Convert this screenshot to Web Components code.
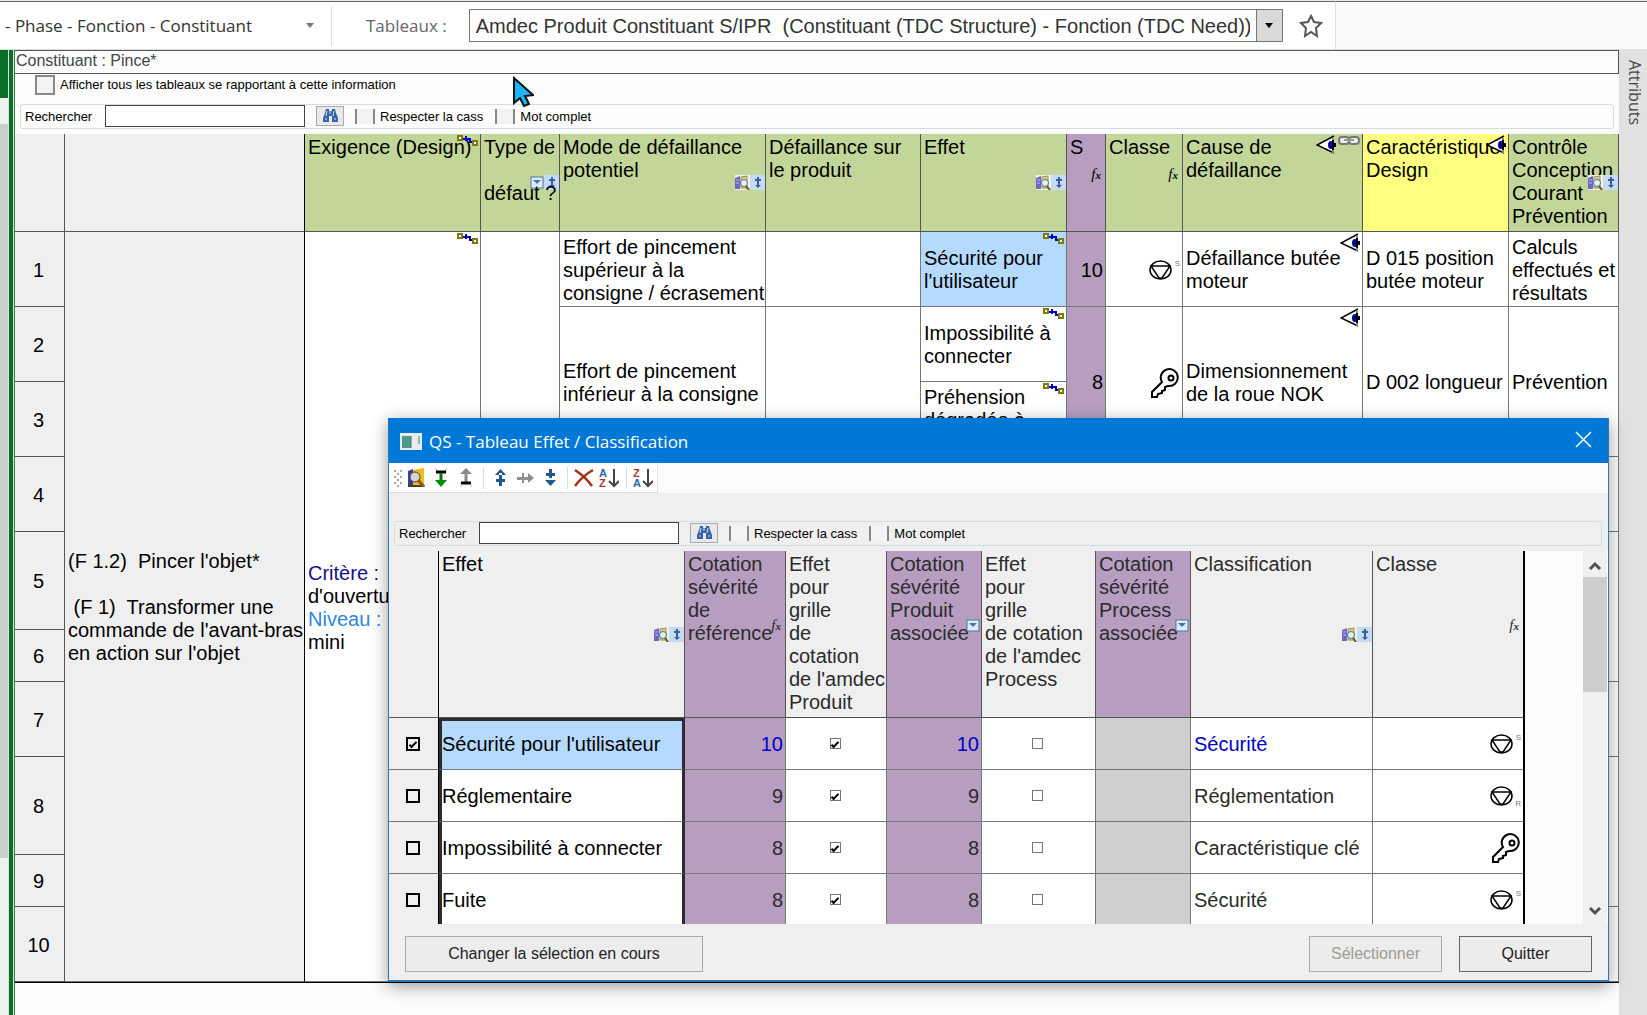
<!DOCTYPE html>
<html lang="fr">
<head>
<meta charset="utf-8">
<title>QS - Tableau Effet / Classification</title>
<style>
  body {
    margin: 0;
    min-height: 100vh;
    background: #fcfcfc;
    font-family: "Liberation Sans", Arial, sans-serif;
    color: #000;
    overflow: hidden;
  }
</style>
</head>
<body>
<qs-app></qs-app>

<script>
// Dessins des icônes : [largeur, hauteur, contenu svg]
const ICONES = {
  lien: [21, 12, `<path d="M6 4h5M9 1v5M9 4h4v3h3" fill="none" stroke="#0000c8" stroke-width="2"/><rect x="1" y="1" width="4" height="4" fill="#fff" stroke="#7d7a10" stroke-width="2"/><rect x="16" y="6" width="4" height="4" fill="#fff" stroke="#7d7a10" stroke-width="2"/>`],
  oeil: [20, 20, `<path d="M18 2 1 10l17 8z" fill="#fff"/><path d="M18 1 1 10l17 8" fill="none" stroke="#000" stroke-width="1.500"/><path d="M17 3v15" stroke="#888" stroke-width="2"/><ellipse cx="15" cy="10" rx="3" ry="4" fill="#0000a0"/><path d="M17 5v10" stroke="#000" stroke-width="2"/><path d="M20 10h-3" stroke="#000" stroke-width="4"/>`],
  maillon: [22, 11, `<rect x="1" y="2" width="10" height="7" rx="3" fill="#eee" stroke="#777" stroke-width="2"/><rect x="11" y="2" width="10" height="7" rx="3" fill="#eee" stroke="#777" stroke-width="2"/><path d="M6 5h10" stroke="#999" stroke-width="2"/>`],
  recherche: [15, 15, `<rect width="15" height="15" fill="#f4f1e4"/><path d="M0 3l5-2v13H0z" fill="#6a68c4"/><path d="M1 5h3M1 8h3" stroke="#c0c0f0"/><path d="M6 2l6-1v12H6z" fill="#d8cc98" stroke="#9a8c50"/><circle cx="9" cy="8" r="3.500" fill="#d8f4f8" stroke="#5f7280"/><path d="M11 11l3 4" stroke="#6b5418" stroke-width="2"/>`],
  inserer: [15, 15, `<rect width="15" height="15" fill="#c5daf3"/><path d="M8 2v8M5 5h6" stroke="#365f9c" stroke-width="2"/><path d="M5 10h6l-3 3z" fill="#365f9c"/>`],
  filtre: [14, 14, `<rect x="1" y="1" width="12" height="11" fill="#dcecff" stroke="#4c76a8"/><path d="M3 4h8l-4 4z" fill="#4474ac"/>`],
  jumelles: [17, 15, `<path d="M4 1h3v2h3V1h3l1 4 2 5v4h-6V8H7v6H1v-4l2-5z" fill="#3b62a8"/><path d="M4 8l1-5M11 8l1-5M3 11h2M12 11h2" stroke="#cfe0f8" stroke-width="1"/><path d="M8 3v3" stroke="#cfe0f8"/>`],
  stop: [23, 20, `<ellipse cx="11.500" cy="10" rx="10.500" ry="9" fill="none" stroke="#000" stroke-width="1.500"/><path d="M2 6h19l-8 12h-3z" fill="none" stroke="#000" stroke-width="1.500"/>`],
  cle: [30, 30, `<path d="M12 14a8.500 8.500 0 1 1 6 4l-3 1v3l-3 1v2l-4 1-1 3H2v-5z" fill="#fff" stroke="#000" stroke-width="2"/><circle cx="21" cy="10" r="2.500" fill="none" stroke="#000" stroke-width="2"/>`],
  etoile: [24, 24, `<path d="M12 2l3 6 7 1-5 5 1 8-6-4-6 4 1-8-5-5 7-1z" fill="#fff" stroke="#555" stroke-width="2"/>`],
  curseur: [22, 32, `<path d="M2 2v25l6-5 4 8 5-2-4-8 8-1z" fill="#18b8f8" stroke="#111" stroke-width="2"/>`],
  fenetre: [22, 17, `<rect width="22" height="17" fill="#e6edf0"/><rect x="2" y="3" width="9" height="12" fill="#4f9a84"/><path d="M11 3v12" stroke="#3c6e80"/><rect x="18" y="3" width="2" height="8" fill="#8cbcae"/>`],
  fermer: [17, 17, `<path d="M1 1l15 15M16 1 1 16" stroke="#fff" stroke-width="1.500"/>`],
  poignee: [9, 18, `<path d="M1 1v17M7 1v17" stroke="#aaa" stroke-width="2" stroke-dasharray="2 4"/><path d="M4 4v14" stroke="#aaa" stroke-width="2" stroke-dasharray="2 4"/>`],
  catalogue: [18, 19, `<path d="M1 3l5-2v17H1z" fill="#3c3ca8"/><path d="M6 2l5-1 6-1v16l-5 2H6z" fill="#f0bc18"/><path d="M1 18h14" stroke="#503c10" stroke-width="2"/><circle cx="8" cy="9" r="5" fill="#d4d4d4" stroke="#444"/><path d="M11 12l6 7" stroke="#8a5a10" stroke-width="3"/>`],
  descendre: [12, 19, `<path d="M1 0v3M11 0v3" stroke="#bbb"/><path d="M1 4h10" stroke="#000" stroke-width="3"/><path d="M6 5v9" stroke="#087808" stroke-width="3"/><path d="M0 12h12l-6 7z" fill="#078a07"/>`],
  monter: [12, 19, `<path d="M6 5v9" stroke="#888" stroke-width="3"/><path d="M0 6h12L6 0z" fill="#8a8a8a"/><path d="M1 15h10" stroke="#000" stroke-width="3"/><path d="M1 16v3M11 16v3" stroke="#bbb"/>`],
  avant: [11, 17, `<path d="M0 6h11L5.500 0zM4 4h3v13H4zM1 10h9v3H1z" fill="#20588c"/>`],
  droite: [17, 12, `<path d="M0 5h12v3H0zM5 1h2v10H5zM11 1l6 5-6 5z" fill="#8e8e8e"/>`],
  apres: [11, 17, `<path d="M0 11h11l-5.500 6zM4 0h3v9H4zM1 4h9v3H1z" fill="#20588c"/>`],
  supprimer: [20, 20, `<path d="M1 2c6 4 12 9 17 16M19 2C12 6 6 11 1 18" fill="none" stroke="#a83018" stroke-width="2.500"/>`],
  triAZ: [20, 20, `<text x="0" y="9" font-size="11" fill="#2a68a8" font-weight="bold">A</text><text x="0" y="19" font-size="11" fill="#b03828" font-weight="bold">Z</text><path d="M15 1v17M10 13l5 5 5-5" fill="none" stroke="#444" stroke-width="2"/>`],
  triZA: [20, 20, `<text x="0" y="9" font-size="11" fill="#b03828" font-weight="bold">Z</text><text x="0" y="19" font-size="11" fill="#2a68a8" font-weight="bold">A</text><path d="M15 1v17M10 13l5 5 5-5" fill="none" stroke="#444" stroke-width="2"/>`],
  haut: [14, 9, `<path d="M2 8l5-5 5 5" fill="none" stroke="#505050" stroke-width="3"/>`],
  bas: [14, 9, `<path d="M2 1l5 5 5-5" fill="none" stroke="#505050" stroke-width="3"/>`],
  fleche: [8, 5, `<path d="M0 0h8L4 5z" fill="currentColor"/>`],
};

class QsIcone extends HTMLElement {
  connectedCallback() {
    const [l, h, dessin] = ICONES[this.getAttribute("nom")];
    this.attachShadow({ mode: "open" }).innerHTML = `
      <style>
        :host { display: inline-flex; flex: none; }
        svg { display: block; }
      </style>
      <svg width="${l}" height="${h}" viewBox="0 0 ${l} ${h}" aria-hidden="true">${dessin}</svg>
    `;
  }
}
customElements.define("qs-icone", QsIcone);

const ico = (nom) => `<qs-icone nom="${nom}"></qs-icone>`;
const FX = `<i class="fx">f<small>x</small></i>`;

// Barre du haut : choix de la vue et du tableau
class QsBarre extends HTMLElement {
  connectedCallback() {
    this.attachShadow({ mode: "open" }).innerHTML = `
      <style>
        :host {
          display: flex;
          height: 50px;
          box-sizing: border-box;
          border-top: 1px solid #e8ede4;
          border-bottom: 1px solid #ddd;
          background: #fafafa;
        }
        .zone {
          display: flex;
          align-items: center;
          border-top: 1px solid #666;
          border-right: 1px solid #ddd;
          background: #fff;
          font-family: "Open Sans", "Noto Sans", sans-serif;
          font-size: 17px;
        }
        .reste { flex: 1; border-top: 1px solid #666; }
        select {
          appearance: none;
          border: 0;
          padding: 0;
          background: none;
          font: inherit;
          color: #333;
        }
        .vue {
          display: flex;
          align-items: center;
          width: 332px;
          height: 40px;
          box-sizing: border-box;
          padding: 0 17px 0 5px;
          border-right: 1px solid #ddd;
          color: #777;
        }
        .vue select { flex: 1; }
        label { padding: 0 22px 0 34px; color: #666; }
        .liste {
          display: flex;
          width: 814px;
          height: 33px;
          box-sizing: border-box;
          border: 1px solid #777;
          font-family: "Liberation Sans", Arial, sans-serif;
          font-size: 20px;
        }
        .liste select { flex: 1; min-width: 0; padding: 0 6px; }
        .liste span {
          display: grid;
          place-items: center;
          width: 25px;
          border-left: 1px solid #777;
          background: #d9d9d9;
        }
        button { border: 0; background: none; padding: 0; margin: 0 12px 0 16px; display: flex; }
      </style>
      <div class="zone">
        <div class="vue">
          <select aria-label="Vue"><option>- Phase - Fonction - Constituant</option></select>
          ${ico("fleche")}
        </div>
        <label for="tableaux">Tableaux :</label>
        <div class="liste">
          <select id="tableaux"><option>Amdec Produit Constituant S/IPR &nbsp;(Constituant (TDC Structure) - Fonction (TDC Need))</option></select>
          <span>${ico("fleche")}</span>
        </div>
        <button aria-label="Favori">${ico("etoile")}</button>
      </div>
      <div class="reste"></div>
    `;
  }
}
customElements.define("qs-barre", QsBarre);

// Ligne de recherche, commune à la page et à la fenêtre
class QsRecherche extends HTMLElement {
  connectedCallback() {
    this.attachShadow({ mode: "open" }).innerHTML = `
      <style>
        :host {
          display: flex;
          align-items: center;
          height: 25px;
          box-sizing: border-box;
          border: 1px solid #d5dde4;
          border-radius: 3px;
          font-size: 13px;
        }
        label { display: flex; align-items: center; gap: 5px; white-space: nowrap; }
        .nom { width: 80px; padding-left: 4px; box-sizing: border-box; }
        .option { margin-right: 12px; }
        .texte {
          width: 200px;
          height: 22px;
          box-sizing: border-box;
          border: 1px solid #444;
          background: #fff;
          margin: 0 11px 2px 4px;
        }
        button {
          display: grid;
          place-items: center;
          width: 28px;
          height: 20px;
          padding: 0;
          border: 1px solid #aaa;
          background: #e9e9ec;
          margin: 0 11px 2px 0;
        }
        .option input {
          appearance: none;
          width: 20px;
          height: 15px;
          margin: 0;
          border: solid #888;
          border-width: 0 2px;
          background: #f3f3f3;
        }
      </style>
      <label class="nom" for="q">Rechercher</label>
      <input class="texte" id="q" type="text">
      <button aria-label="Lancer la recherche">${ico("jumelles")}</button>
      <label class="option"><input type="checkbox">Respecter la cass</label>
      <label class="option"><input type="checkbox">Mot complet</label>
    `;
  }
}
customElements.define("qs-recherche", QsRecherche);

const STYLE_TABLE = `
  :host { display: block; font-size: 20px; line-height: 23px; }
  table { width: 100%; table-layout: fixed; border-collapse: separate; border-spacing: 0; }
  th, td {
    position: relative;
    box-sizing: border-box;
    padding: 2px 2px 0 3px;
    border: solid #777;
    border-width: 0 1px 1px 0;
    font-weight: normal;
    text-align: left;
    white-space: pre;
    background: #fff;
  }
  th { vertical-align: top; border-color: #555; background: #efefef; }
  td { vertical-align: middle; }
  .violet { background: #b79ec1; }
  .bleu { background: #b5daff; }
  .nombre { text-align: right; }
  /* Pictogrammes posés sur le bord droit de la cellule */
  .marge { position: absolute; inset: 0 0 0 auto; display: flex; align-items: center; }
  .formule { padding: 0 4px 16px 0; }
  .coin { position: absolute; top: 1px; right: 2px; display: flex; gap: 2px; }
  .fx { font-family: "Liberation Serif", serif; font-size: 15px; line-height: 15px; }
  .fx small { font-size: 11px; font-weight: bold; }
  .classe { display: flex; justify-content: flex-end; align-items: center; }
  .classe small { width: 8px; height: 23px; font-size: 8px; line-height: 10px; color: #777; text-align: right; }
  .classe .r { line-height: 38px; }
`;

const CHERCHER = `<span class="marge">${ico("recherche")}${ico("inserer")}</span>`;
const FORMULE = `<span class="marge formule">${FX}</span>`;
const LIEN = `<span class="coin">${ico("lien")}</span>`;
const OEIL = `<span class="coin">${ico("oeil")}</span>`;

function symbole(nom, lettre) {
  const indice = lettre ? `<small class="${lettre.toLowerCase()}">${lettre}</small>` : "";
  return `<div class="classe">${ico(nom)}${indice}</div>`;
}

// Tableau AMDEC principal
class QsAmdec extends HTMLElement {
  connectedCallback() {
    const largeurs = [50, 240, 176, 79, 206, 155, 146, 39, 77, 180, 146, 110];
    const hauteurs = [75, 75, 75, 75, 98, 52, 75, 98, 52, 75];
    // Première ligne de chaque groupe -> nombre de lignes fusionnées
    const groupes = { 1: 1, 2: 2, 4: 1, 5: 2, 7: 1, 8: 2, 10: 1 };

    const contenu = {
      1: ["Effort de pincement\nsupérieur à la\nconsigne / écrasement", "", "Sécurité pour\nl'utilisateur" + LIEN, "10",
        symbole("stop", "S"), "Défaillance butée\nmoteur" + OEIL, "D 015 position\nbutée moteur", "Calculs\neffectués et\nrésultats"],
      2: ["Effort de pincement\ninférieur à la consigne", "", "Impossibilité à\nconnecter" + LIEN, "8",
        symbole("cle"), "Dimensionnement\nde la roue NOK" + OEIL, "D 002 longueur", "Prévention"],
    };

    let lignes = "";
    hauteurs.forEach((hauteur, i) => {
      const n = i + 1;
      let cellules = `<td class="numero">${n}</td>`;
      if (n === 1) {
        cellules += `<td rowspan="10" class="fonction">(F 1.2)  Pincer l'objet*\n\n (F 1)  Transformer une\ncommande de l'avant-bras\nen action sur l'objet</td>`;
        cellules += `<td rowspan="10"><span class="critere">Critère :</span>\nd'ouverture\n<span class="niveau">Niveau :</span>\nmini${LIEN}</td>`;
        cellules += `<td rowspan="10"></td>`;
      }
      if (groupes[n]) {
        const textes = contenu[n] || Array(8).fill("");
        textes.forEach((texte, c) => {
          let classe = "";
          if (c === 2 && n === 1) classe = "bleu";
          if (c === 3) classe = "violet nombre";
          // Seul l'effet n'est pas fusionné sur les lignes 2 et 3
          const span = c === 2 && n === 2 ? 1 : groupes[n];
          cellules += `<td rowspan="${span}" class="${classe}">${texte}</td>`;
        });
      }
      if (n === 3) cellules += `<td>Préhension\ndégradée à\n ${LIEN}</td>`;
      lignes += `<tr style="height:${hauteur}px">${cellules}</tr>`;
    });

    this.attachShadow({ mode: "open" }).innerHTML = `
      <style>${STYLE_TABLE}
        table { border-bottom: 1px solid #000; }
        .entete { height: 98px; }
        .vert { background: #c3d699; }
        .jaune { background: #ffff80; }
        .numero { background: #efefef; text-align: center; border-color: #555; padding: 2px 2px 0 0; }
        .fonction, .entete th:nth-child(2) { background: #efefef; border-right-color: #000; }
        .dessus { position: relative; }
        .critere { color: #10108a; }
        .niveau { color: #2f86dc; }
      </style>
      <table>
        <colgroup>${largeurs.map((l) => `<col style="width:${l}px">`).join("")}</colgroup>
        <thead>
          <tr class="entete">
            <th></th>
            <th></th>
            <th class="vert">Exigence (Design)${LIEN}</th>
            <th class="vert"><span class="marge">${ico("filtre")}${ico("inserer")}</span><span class="dessus">Type de\n\ndéfaut ?</span></th>
            <th class="vert">Mode de défaillance\npotentiel${CHERCHER}</th>
            <th class="vert">Défaillance sur\nle produit</th>
            <th class="vert">Effet${CHERCHER}</th>
            <th class="violet">S${FORMULE}</th>
            <th class="vert">Classe${FORMULE}</th>
            <th class="vert">Cause de\ndéfaillance<span class="coin">${ico("oeil")}${ico("maillon")}</span></th>
            <th class="jaune">Caractéristique\nDesign${OEIL}</th>
            <th class="vert">Contrôle\nConception\nCourant\nPrévention${CHERCHER}</th>
          </tr>
        </thead>
        <tbody>${lignes}</tbody>
      </table>
    `;
  }
}
customElements.define("qs-amdec", QsAmdec);

// Tableau Effet / Classification de la fenêtre
class QsClassification extends HTMLElement {
  connectedCallback() {
    const largeurs = [50, 246, 101, 101, 95, 114, 95, 182, 151];
    const donnees = [
      { effet: "Sécurité pour l'utilisateur", cote: 10, classe: "Sécurité", dessin: symbole("stop", "S"), choisi: true },
      { effet: "Réglementaire", cote: 9, classe: "Réglementation", dessin: symbole("stop", "R") },
      { effet: "Impossibilité à connecter", cote: 8, classe: "Caractéristique clé", dessin: symbole("cle") },
      { effet: "Fuite", cote: 8, classe: "Sécurité", dessin: symbole("stop", "S") },
    ];
    const filtre = `<span class="marge filtre">${ico("filtre")}</span>`;

    const lignes = donnees.map((d) => `
      <tr class="${d.choisi ? "choisi" : ""}">
        <td class="case"><input type="checkbox" aria-label="Choisir ${d.effet}" ${d.choisi ? "checked" : ""}></td>
        <td class="effet">${d.effet}</td>
        <td class="violet nombre">${d.cote}</td>
        <td class="coche"><input type="checkbox" aria-label="Amdec Produit" checked></td>
        <td class="violet nombre">${d.cote}</td>
        <td class="coche"><input type="checkbox" aria-label="Amdec Process"></td>
        <td class="gris"></td>
        <td class="lien">${d.classe}</td>
        <td>${d.dessin}</td>
      </tr>`).join("");

    this.attachShadow({ mode: "open" }).innerHTML = `
      <style>${STYLE_TABLE}
        :host { color: #2b2b2b; }
        .entete { height: 167px; }
        tbody tr { height: 52px; }
        td { padding-top: 1px; }
        table { border-right: 1px solid #000; }
        th:last-child, td:last-child { border-right-color: #000; }
        th:first-child, .case { background: #efefef; border-right-color: #000; }
        th:nth-child(2), .effet { color: #000; }
        .effet { border-left: 3px solid #2b2b30; border-right: 3px solid #2b2b30; padding-left: 0; }
        .choisi .effet { background: #b5daff; border-top: 3px solid #2b2b30; padding: 0 0 2px; }
        .choisi .nombre, .choisi .lien { color: #0000c8; }
        .gris { background: #cfcfcf; }
        .filtre { padding: 0 1px 16px 0; }
        .case, .coche { text-align: center; padding: 0 2px 2px 0; }
        input {
          appearance: none;
          display: inline-grid;
          width: 14px;
          height: 14px;
          margin: 0;
          border: 2px solid #000;
          vertical-align: middle;
          overflow: visible;
        }
        .coche input { width: 11px; height: 11px; border: 1px solid #777; }
        input:checked::after {
          content: "";
          place-self: center;
          width: 8px;
          height: 4px;
          box-sizing: border-box;
          border: solid #000;
          border-width: 0 0 2px 2px;
          transform: rotate(-45deg);
        }
      </style>
      <table>
        <colgroup>${largeurs.map((l) => `<col style="width:${l}px">`).join("")}</colgroup>
        <thead>
          <tr class="entete">
            <th></th>
            <th>Effet${CHERCHER}</th>
            <th class="violet">Cotation\nsévérité\nde\nréférence${FORMULE}</th>
            <th>Effet\npour\ngrille\nde\ncotation\nde l'amdec\nProduit</th>
            <th class="violet">Cotation\nsévérité\nProduit\nassociée${filtre}</th>
            <th>Effet\npour\ngrille\nde cotation\nde l'amdec\nProcess</th>
            <th class="violet">Cotation\nsévérité\nProcess\nassociée${filtre}</th>
            <th>Classification${CHERCHER}</th>
            <th>Classe${FORMULE}</th>
          </tr>
        </thead>
        <tbody>${lignes}</tbody>
      </table>
    `;
  }
}
customElements.define("qs-classification", QsClassification);

// Fenêtre avec titre, barre d'outils, contenu et boutons
class QsFenetre extends HTMLElement {
  connectedCallback() {
    const outils = [
      ["catalogue", "Catalogue"], ["descendre", "Descendre"], ["monter", "Monter"], null,
      ["avant", "Insérer avant"], ["droite", "Insérer à droite"], ["apres", "Insérer après"], null,
      ["supprimer", "Supprimer"], ["triAZ", "Tri croissant"], null, ["triZA", "Tri décroissant"],
    ];
    this.attachShadow({ mode: "open" }).innerHTML = `
      <style>
        :host {
          display: flex;
          flex-direction: column;
          border: solid #2a7ab8;
          border-width: 0 1px 2px;
          background: #efefef;
          box-shadow: 0 4px 16px rgba(0, 0, 0, 0.4);
        }
        header {
          display: flex;
          align-items: center;
          gap: 7px;
          height: 45px;
          box-sizing: border-box;
          padding: 1px 16px 0 11px;
          background: #0078d7;
          color: #fff;
          font-family: "Open Sans", "Noto Sans", sans-serif;
          font-size: 17px;
        }
        h1 { flex: 1; margin: 0; font: inherit; }
        button { padding: 0; border: 0; background: none; font: inherit; }
        .bandeau { display: flex; height: 30px; background: #fbfbfb; }
        .outils {
          display: flex;
          align-items: center;
          padding: 0 1px 0 5px;
          background: #fff;
          border: solid #ddd;
          border-width: 0 1px 1px 0;
        }
        .outils button { display: grid; place-items: center; width: 25px; height: 25px; }
        .outils qs-icone:first-child { margin-right: 1px; }
        .outils hr { width: 1px; height: 22px; margin: 0 4px; border: 0; background: #ddd; }
        ::slotted(qs-recherche) { margin: 28px 6px 5px 5px; }
        .corps { display: flex; height: 373px; overflow: hidden; background: #fcfcfc; padding-right: 1px; }
        .grille { flex: 1; min-width: 0; }
        .defilement {
          display: flex;
          flex-direction: column;
          align-items: center;
          width: 24px;
          margin-left: 59px;
          background: #f0f0f0;
        }
        .defilement div { flex: none; width: 24px; height: 115px; margin: 7px 0 auto; background: #cdcdcd; }
        .defilement qs-icone { padding-top: 10px; }
        .defilement qs-icone:last-child { padding: 0 0 8px; }
        footer { display: flex; gap: 17px; padding: 12px 16px 8px; }
        footer button {
          width: 133px;
          height: 36px;
          border: 1px solid #666;
          background: #ececec;
          font-size: 16px;
          color: #222;
        }
        footer .large { width: 298px; margin-right: auto; border-color: #aaa; }
        footer button:disabled { color: #9c9c94; border-color: #aaa; }
      </style>
      <header>
        ${ico("fenetre")}
        <h1>${this.getAttribute("titre")}</h1>
        <button aria-label="Fermer">${ico("fermer")}</button>
      </header>
      <div class="bandeau">
        <div class="outils">
          ${ico("poignee")}
          ${outils.map((o) => (o ? `<button aria-label="${o[1]}">${ico(o[0])}</button>` : "<hr>")).join("")}
        </div>
      </div>
      <slot name="recherche"></slot>
      <div class="corps">
        <div class="grille"><slot></slot></div>
        <div class="defilement">${ico("haut")}<div></div>${ico("bas")}</div>
      </div>
      <footer>
        <button class="large">Changer la sélection en cours</button>
        <button disabled>Sélectionner</button>
        <button>Quitter</button>
      </footer>
    `;
  }
}
customElements.define("qs-fenetre", QsFenetre);

class QsApp extends HTMLElement {
  connectedCallback() {
    this.attachShadow({ mode: "open" }).innerHTML = `
      <style>
        :host { display: flex; flex-direction: column; min-height: 100vh; position: relative; }
        .page { flex: 1; display: flex; }
        .gauche { display: flex; flex-direction: column; width: 8px; background: #f0f0f0; border-top: 48px solid #0a7028; }
        .gauche div { height: 734px; margin-top: 26px; background: #cdcdcd; }
        .filet { width: 4px; background: #0a7028; border-left: 1px solid #d8e8d8; border-right: 1px solid #d8e8d8; }
        main { flex: 1; min-width: 0; border-left: 1px solid #3c7c4c; }
        .sujet {
          height: 24px;
          box-sizing: border-box;
          border: 1px solid #555;
          border-left: 0;
          padding-left: 1px;
          font-size: 16px;
          line-height: 20px;
          color: #444;
        }
        .option { display: flex; align-items: center; gap: 5px; height: 21px; padding: 0 0 9px 20px; font-size: 13px; }
        .option input { appearance: none; width: 20px; height: 20px; margin: 0; border: 2px solid #888; background: #f3f3f3; }
        .chercher { margin: 0 5px 5px; }
        aside {
          width: 28px;
          background: #e1e1e1;
          box-sizing: border-box;
          padding-top: 10px;
          color: #444;
          font-family: "Open Sans", "Noto Sans", sans-serif;
          font-size: 16px;
        }
        aside span { writing-mode: vertical-rl; line-height: 24px; padding-left: 4px; }
        qs-fenetre { position: absolute; top: 418px; left: 388px; right: 38px; }
        .curseur { position: absolute; top: 76px; left: 512px; }
      </style>
      <qs-barre></qs-barre>
      <div class="page">
        <div class="gauche"><div></div></div>
        <div class="filet"></div>
        <main>
          <div class="sujet">Constituant : Pince*</div>
          <label class="option"><input type="checkbox">Afficher tous les tableaux se rapportant à cette information</label>
          <qs-recherche class="chercher"></qs-recherche>
          <qs-amdec></qs-amdec>
        </main>
        <aside><span>Attributs</span></aside>
      </div>
      <qs-fenetre titre="QS - Tableau Effet / Classification">
        <qs-recherche slot="recherche"></qs-recherche>
        <qs-classification></qs-classification>
      </qs-fenetre>
      <qs-icone class="curseur" nom="curseur"></qs-icone>
    `;
  }
}
customElements.define("qs-app", QsApp);
</script>
</body>
</html>
